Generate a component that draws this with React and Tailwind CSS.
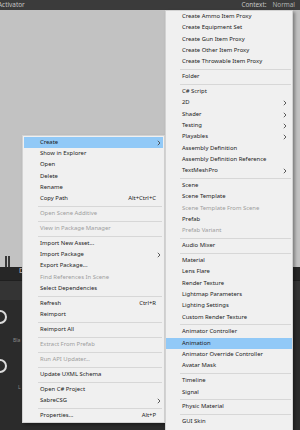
const mainItems = [
  { t: 'Create', arrow: true, hl: true },
  { t: 'Show in Explorer' },
  { t: 'Open' },
  { t: 'Delete' },
  { t: 'Rename' },
  { t: 'Copy Path', k: 'Alt+Ctrl+C' },
  'sep',
  { t: 'Open Scene Additive', off: true },
  'sep',
  { t: 'View in Package Manager', off: true },
  'sep',
  { t: 'Import New Asset...' },
  { t: 'Import Package', arrow: true },
  { t: 'Export Package...' },
  { t: 'Find References In Scene', off: true },
  { t: 'Select Dependencies' },
  'sep',
  { t: 'Refresh', k: 'Ctrl+R' },
  { t: 'Reimport' },
  'sep',
  { t: 'Reimport All' },
  'sep',
  { t: 'Extract From Prefab', off: true },
  'sep',
  { t: 'Run API Updater...', off: true },
  'sep',
  { t: 'Update UXML Schema' },
  'sep',
  { t: 'Open C# Project' },
  { t: 'SabreCSG', arrow: true },
  'sep',
  { t: 'Properties...', k: 'Alt+P' },
];

const subItems = [
  { t: 'Create Ammo Item Proxy' },
  { t: 'Create Equipment Set' },
  { t: 'Create Gun Item Proxy' },
  { t: 'Create Other Item Proxy' },
  { t: 'Create Throwable Item Proxy' },
  'sep',
  { t: 'Folder' },
  'sep',
  { t: 'C# Script' },
  { t: '2D', arrow: true },
  { t: 'Shader', arrow: true },
  { t: 'Testing', arrow: true },
  { t: 'Playables', arrow: true },
  { t: 'Assembly Definition' },
  { t: 'Assembly Definition Reference' },
  { t: 'TextMeshPro', arrow: true },
  'sep',
  { t: 'Scene' },
  { t: 'Scene Template' },
  { t: 'Scene Template From Scene', off: true },
  { t: 'Prefab' },
  { t: 'Prefab Variant', off: true },
  'sep',
  { t: 'Audio Mixer' },
  'sep',
  { t: 'Material' },
  { t: 'Lens Flare' },
  { t: 'Render Texture' },
  { t: 'Lightmap Parameters' },
  { t: 'Lighting Settings' },
  { t: 'Custom Render Texture' },
  'sep',
  { t: 'Animator Controller' },
  { t: 'Animation', hl: true },
  { t: 'Animator Override Controller' },
  { t: 'Avatar Mask' },
  'sep',
  { t: 'Timeline' },
  { t: 'Signal' },
  'sep',
  { t: 'Physic Material' },
  'sep',
  { t: 'GUI Skin' },
];

const Chevron = () => (
  <svg width="4" height="6" viewBox="0 0 4 6" className="shrink-0">
    <path d="M0.8 0.8 L3 3 L0.8 5.2" fill="none" stroke="#4a4a4a" strokeWidth="0.9" />
  </svg>
);

const MenuList = ({ items, sub }) => (
  <>
    {items.map((it, i) =>
      it === 'sep' ? (
        <div key={i} className="h-[3.6px] flex items-center ml-[14px] mr-[1px]">
          <div className="h-px w-full bg-[#d7d7d7]" />
        </div>
      ) : (
        <div
          key={i}
          className={`relative flex items-center h-[11.3px] pl-[16px] leading-none whitespace-nowrap ${
            it.hl ? 'bg-[#91c9f7]' : ''
          } ${it.off ? 'text-[#9d9d9d]' : 'text-[#1b1b1b]'}`}
        >
          <span>{it.t}</span>
          {it.k && <span className="ml-auto pr-[7px]">{it.k}</span>}
          {it.arrow && (
            <span className={`absolute top-[2.7px] ${sub ? 'right-[5px]' : 'right-[2px]'}`}>
              <Chevron />
            </span>
          )}
        </div>
      )
    )}
  </>
);

export default function App() {
  return (
    <div className="w-[300px] h-[430px] relative overflow-hidden flex flex-col bg-[#2a2a2a] font-['Noto_Sans',sans-serif]">
      {/* title bar */}
      <div className="h-[10px] bg-[#3b3b3b] flex items-center justify-between text-[6.4px] leading-none text-[#c6c6c6] pr-[5px]">
        <span className="-ml-[2px]">Activator</span>
        <span>
          Context:<span className="ml-[6px] text-[#b4b4b4]">Normal</span>
        </span>
      </div>

      {/* light canvas */}
      <div className="h-[257px] bg-[#c2c2c2] flex items-end pl-[5px] gap-[1.5px]">
        <div className="w-[1.5px] h-[11px] bg-[#3a3a3a]" />
        <div className="w-[1.5px] h-[11px] bg-[#3a3a3a]" />
      </div>

      {/* toolbar bands */}
      <div className="h-[13px] bg-[#262626] pl-[19px] text-[7px] leading-none text-[#d0d0d0]">D</div>
      <div className="h-[20px] bg-[#343434] border-t border-[#1f1f1f]" />

      {/* dark panel */}
      <div className="flex-1 bg-[#2b2b2b] pt-[10px] flex flex-col">
        <div className="w-[14px] h-[14px] -ml-[7px] rounded-full border-2 border-[#dcdcdc]" />
        <div className="mt-[14px] pl-[13px] text-[5px] leading-none text-[#8c8c8c]">Bla</div>
        <div className="mt-[16px] w-[14px] h-[14px] -ml-[7px] rounded-full border-2 border-[#dcdcdc]" />
        <div className="mt-[12px] pl-[18px] text-[5px] leading-none text-[#8c8c8c]">L</div>
      </div>

      {/* context menu */}
      <div className="absolute left-[22px] top-[135px] w-[143px] bg-[#f0f0f0] border border-[#d2d2d2] p-[1px] text-[5.9px] shadow-[2px_2px_3px_rgba(0,0,0,0.35)]">
        <MenuList items={mainItems} />
      </div>

      {/* create submenu */}
      <div className="absolute left-[165px] top-[10px] w-[128px] bg-[#f0f0f0] border border-[#d2d2d2] pt-[0.5px] pb-[10px] text-[5.9px] shadow-[2px_2px_3px_rgba(0,0,0,0.35)]">
        <MenuList items={subItems} sub />
      </div>
    </div>
  );
}
